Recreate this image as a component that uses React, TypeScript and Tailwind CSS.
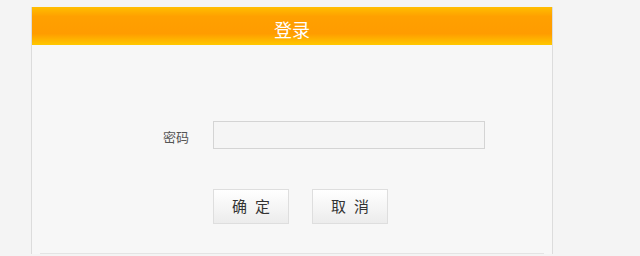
import * as React from 'react';

export default function App() {
  return (
    <div className="w-[640px] h-[256px] overflow-hidden bg-[#f4f4f4] pt-[7px] font-['Noto_Sans_CJK_SC',sans-serif]">
      <div className="ml-[31px] w-[522px] border-x border-[#dcdcdc] bg-[#f7f7f7]">
        <div className="h-[38px] flex items-center justify-center pt-[9px] bg-[linear-gradient(to_bottom,#ffbe00,#ffa000_25%,#ff9c00_70%,#ffc800)]">
          <span className="text-white text-[18px] leading-none font-['Liberation_Serif','Noto_Sans_CJK_SC',serif]">登录</span>
        </div>
        <div className="mx-[8px] border-b border-[#e4e4e4] pb-[29px]">
          <div className="pt-[76px] flex items-center pl-[123px]">
            <span className="text-[13px] text-[#555] w-[27px] pt-[3px]">密码</span>
            <input
              type="password"
              className="ml-[23px] w-[272px] h-[28px] border border-[#d4d4d4] bg-[#f5f5f5] outline-none px-2 text-sm"
            />
          </div>
          <div className="mt-[40px] flex pl-[173px] gap-[23px]">
            <button className="w-[76px] h-[35px] border border-[#dedede] bg-[linear-gradient(to_bottom,#ffffff,#ececec)] text-[15px] text-[#333] tracking-[8px] pl-[8px]">
              确定
            </button>
            <button className="w-[76px] h-[35px] border border-[#dedede] bg-[linear-gradient(to_bottom,#ffffff,#ececec)] text-[15px] text-[#333] tracking-[8px] pl-[8px]">
              取消
            </button>
          </div>
        </div>
      </div>
    </div>
  );
}
